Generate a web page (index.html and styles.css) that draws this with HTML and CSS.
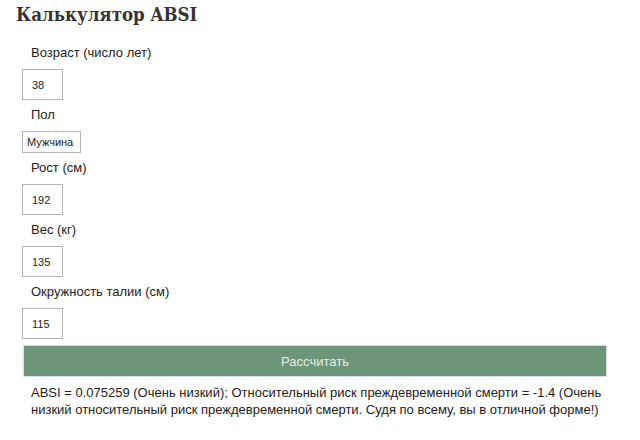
FILE: index.html
```html
<!DOCTYPE html>
<html lang="ru">
<head>
<meta charset="utf-8">
<title>Калькулятор ABSI</title>
<link rel="stylesheet" href="styles.css">
</head>
<body>
<h1 class="title">Калькулятор ABSI</h1>
<form class="calc">
  <div class="field">
    <label class="label">Возраст (число лет)</label>
    <input class="num" type="text" value="38">
  </div>
  <div class="field">
    <label class="label">Пол</label>
    <select class="sel"><option>Мужчина</option></select>
  </div>
  <div class="field">
    <label class="label">Рост (см)</label>
    <input class="num" type="text" value="192">
  </div>
  <div class="field">
    <label class="label">Вес (кг)</label>
    <input class="num" type="text" value="135">
  </div>
  <div class="field">
    <label class="label">Окружность талии (см)</label>
    <input class="num" type="text" value="115">
  </div>
  <button class="btn" type="button">Рассчитать</button>
  <p class="result">ABSI = 0.075259 (Очень низкий); Относительный риск преждевременной смерти = -1.4 (Очень низкий относительный риск преждевременной смерти. Судя по всему, вы в отличной форме!)</p>
</form>
</body>
</html>
```
FILE: styles.css
```css
html, body {
  margin: 0;
  padding: 0;
  background: #ffffff;
}
body {
  font-family: "Liberation Sans", Arial, sans-serif;
  color: #222222;
}
.title {
  font-family: "DejaVu Serif Condensed", "DejaVu Serif", serif;
  font-weight: bold;
  font-size: 18.5px;
  line-height: 30px;
  margin: 0 0 13px 16px;
  color: #333333;
}
.calc {
  padding-left: 22px;
  width: 584px;
}
.field {
  display: flex;
  flex-direction: column;
  align-items: flex-start;
  margin-bottom: 5px;
}
.label {
  display: block;
  font-size: 13px;
  line-height: 20px;
  padding-left: 9px;
  margin-bottom: 6px;
  color: #222222;
}
.num {
  box-sizing: border-box;
  width: 41px;
  height: 31px;
  border: 1px solid #b5b5b5;
  border-radius: 0;
  padding: 0 0 0 9px;
  margin: 0;
  font-family: "Liberation Sans", Arial, sans-serif;
  font-size: 11px;
  color: #222222;
  background: #ffffff;
  outline: none;
}
.sel {
  box-sizing: border-box;
  appearance: none;
  -webkit-appearance: none;
  width: 59px;
  height: 22px;
  border: 1px solid #b5b5b5;
  border-radius: 0;
  padding: 0 0 0 4px;
  margin: 0;
  font-family: "Liberation Sans", Arial, sans-serif;
  font-size: 11px;
  color: #222222;
  background: #ffffff;
}
.btn {
  display: block;
  box-sizing: border-box;
  width: 584px;
  height: 32px;
  margin: 6px 0 0 1px;
  background: #6d957a;
  border: 1px solid #d8e2da;
  color: #e6ede8;
  font-family: "Liberation Sans", Arial, sans-serif;
  font-size: 13px;
  padding: 0;
}
.result {
  margin: 7px 0 0 0;
  padding-left: 9px;
  font-size: 13px;
  line-height: 17px;
  color: #222222;
}
```
